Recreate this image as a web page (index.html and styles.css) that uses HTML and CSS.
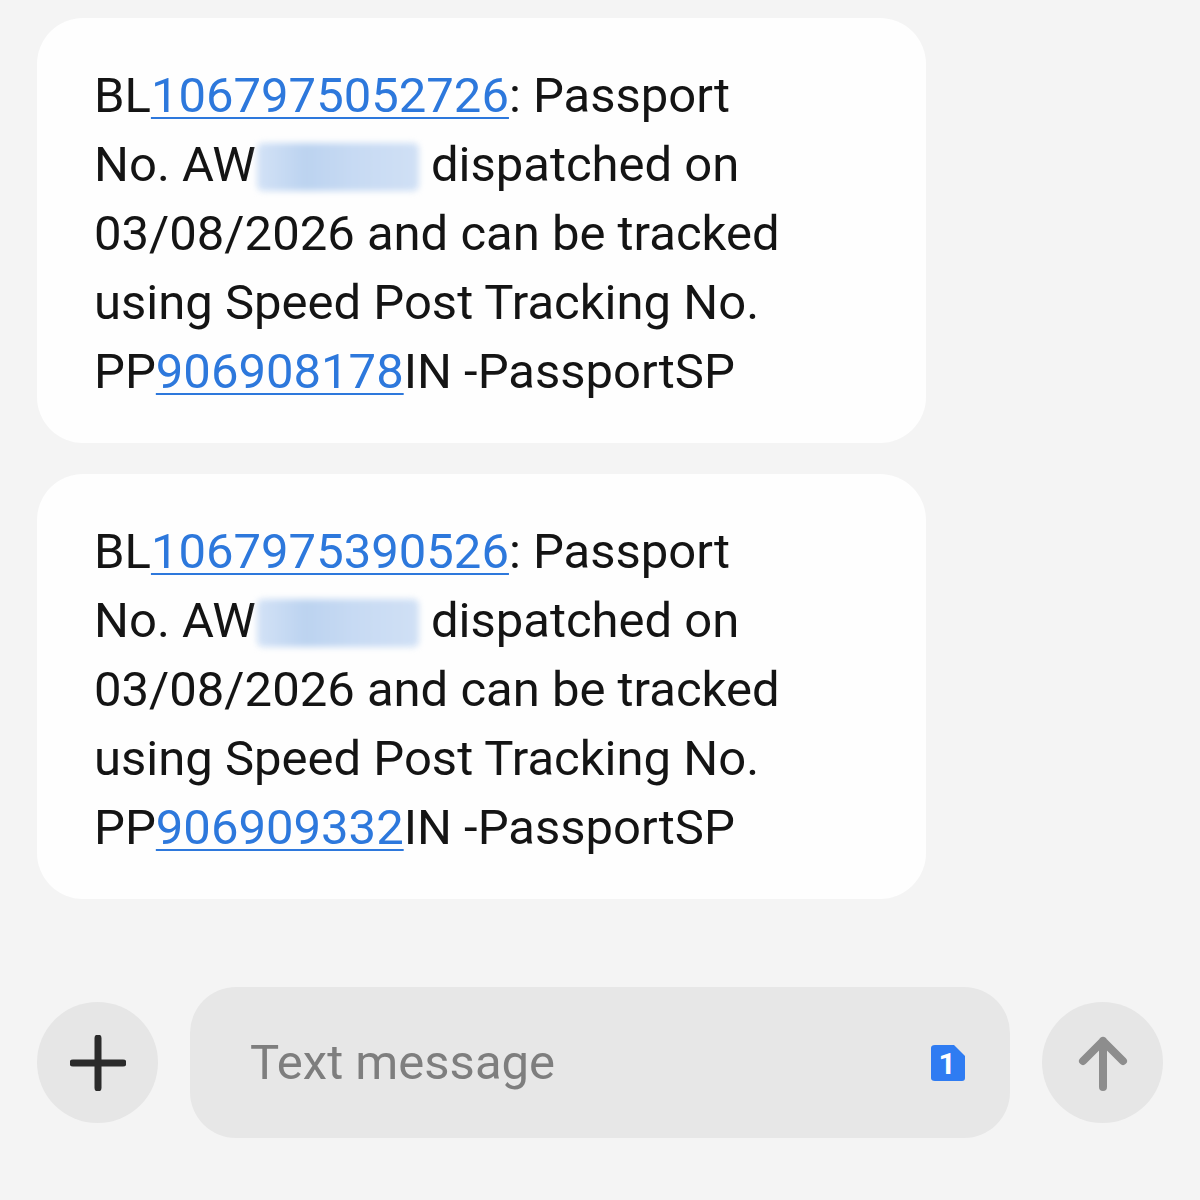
FILE: index.html
```html
<!DOCTYPE html>
<html lang="en">

<head>
    <meta charset="UTF-8">
    <meta name="viewport" content="width=device-width, initial-scale=1.0">
    <title>Messages</title>
    <link rel="stylesheet" href="styles.css">
</head>

<body>
    <div class="chat">
        <div class="messages">
            <div class="bubble">
                BL<a href="#">1067975052726</a>: Passport<br>
                No. AW<span class="hidden"></span> dispatched on<br>
                03/08/2026 and can be tracked<br>
                using Speed Post Tracking No.<br>
                PP<a href="#">906908178</a>IN -PassportSP
            </div>
            <div class="bubble">
                BL<a href="#">1067975390526</a>: Passport<br>
                No. AW<span class="hidden"></span> dispatched on<br>
                03/08/2026 and can be tracked<br>
                using Speed Post Tracking No.<br>
                PP<a href="#">906909332</a>IN -PassportSP
            </div>
        </div>

        <div class="composer">
            <div class="round-btn">
                <svg width="56" height="56" viewBox="0 0 56 56">
                    <path d="M28 3 V53 M3 28 H53" stroke="#2b2b2b" stroke-width="7" stroke-linecap="round" fill="none" />
                </svg>
            </div>
            <div class="field">
                <span class="placeholder">Text message</span>
                <span class="sim">
                    <svg width="36" height="38" viewBox="0 0 36 38">
                        <path d="M5 1 H24 L35 12 V34 Q35 37 32 37 H5 Q1 37 1 34 V4 Q1 1 5 1 Z" fill="#2f7cf2" />
                        <text x="17" y="30" text-anchor="middle" font-family="Roboto, sans-serif" font-size="30" font-weight="700" fill="#fff">1</text>
                    </svg>
                </span>
            </div>
            <div class="round-btn">
                <svg width="60" height="60" viewBox="0 0 60 60">
                    <path d="M30 54 V8 M10 28 L30 8 L50 28" stroke="#8d8d8d" stroke-width="8" stroke-linecap="round" stroke-linejoin="round" fill="none" />
                </svg>
            </div>
        </div>
    </div>
</body>

</html>
```

FILE: styles.css
```css
* {
    padding: 0;
    margin: 0;
    box-sizing: border-box;
}

body {
    background: #f4f4f4;
    font-family: Roboto, "Noto Sans", sans-serif;
    width: 1200px;
    height: 1200px;
}

.chat {
    padding: 18px 37px 0 37px;
}

.messages {
    display: flex;
    flex-direction: column;
    gap: 31px;
}

.bubble {
    width: 889px;
    background: #fefefe;
    border-radius: 46px;
    padding: 43px 20px 37px 57px;
    font-size: 49px;
    line-height: 69px;
    color: #141414;
}

.bubble a {
    color: #2d78dc;
    text-decoration: underline;
    text-decoration-thickness: 2px;
    text-underline-offset: 5px;
}

.hidden {
    display: inline-block;
    width: 162px;
    height: 48px;
    margin-left: 1px;
    vertical-align: -10px;
    border-radius: 6px;
    background: linear-gradient(90deg, #d3e2f6, #bcd3f0 30%, #c7daf3 60%, #d0e0f5);
    filter: blur(3px);
}

.composer {
    display: flex;
    align-items: center;
    gap: 32px;
    margin-top: 88px;
}

.round-btn {
    width: 121px;
    height: 121px;
    border-radius: 50%;
    background: #e6e6e6;
    display: flex;
    align-items: center;
    justify-content: center;
    flex-shrink: 0;
}

.field {
    width: 821px;
    height: 151px;
    border-radius: 46px;
    background: #e7e7e7;
    display: flex;
    align-items: center;
    padding: 0 44px 0 60px;
}

.placeholder {
    flex: 1;
    font-size: 49px;
    color: #7e7e7e;
}

.sim {
    display: flex;
}
```
